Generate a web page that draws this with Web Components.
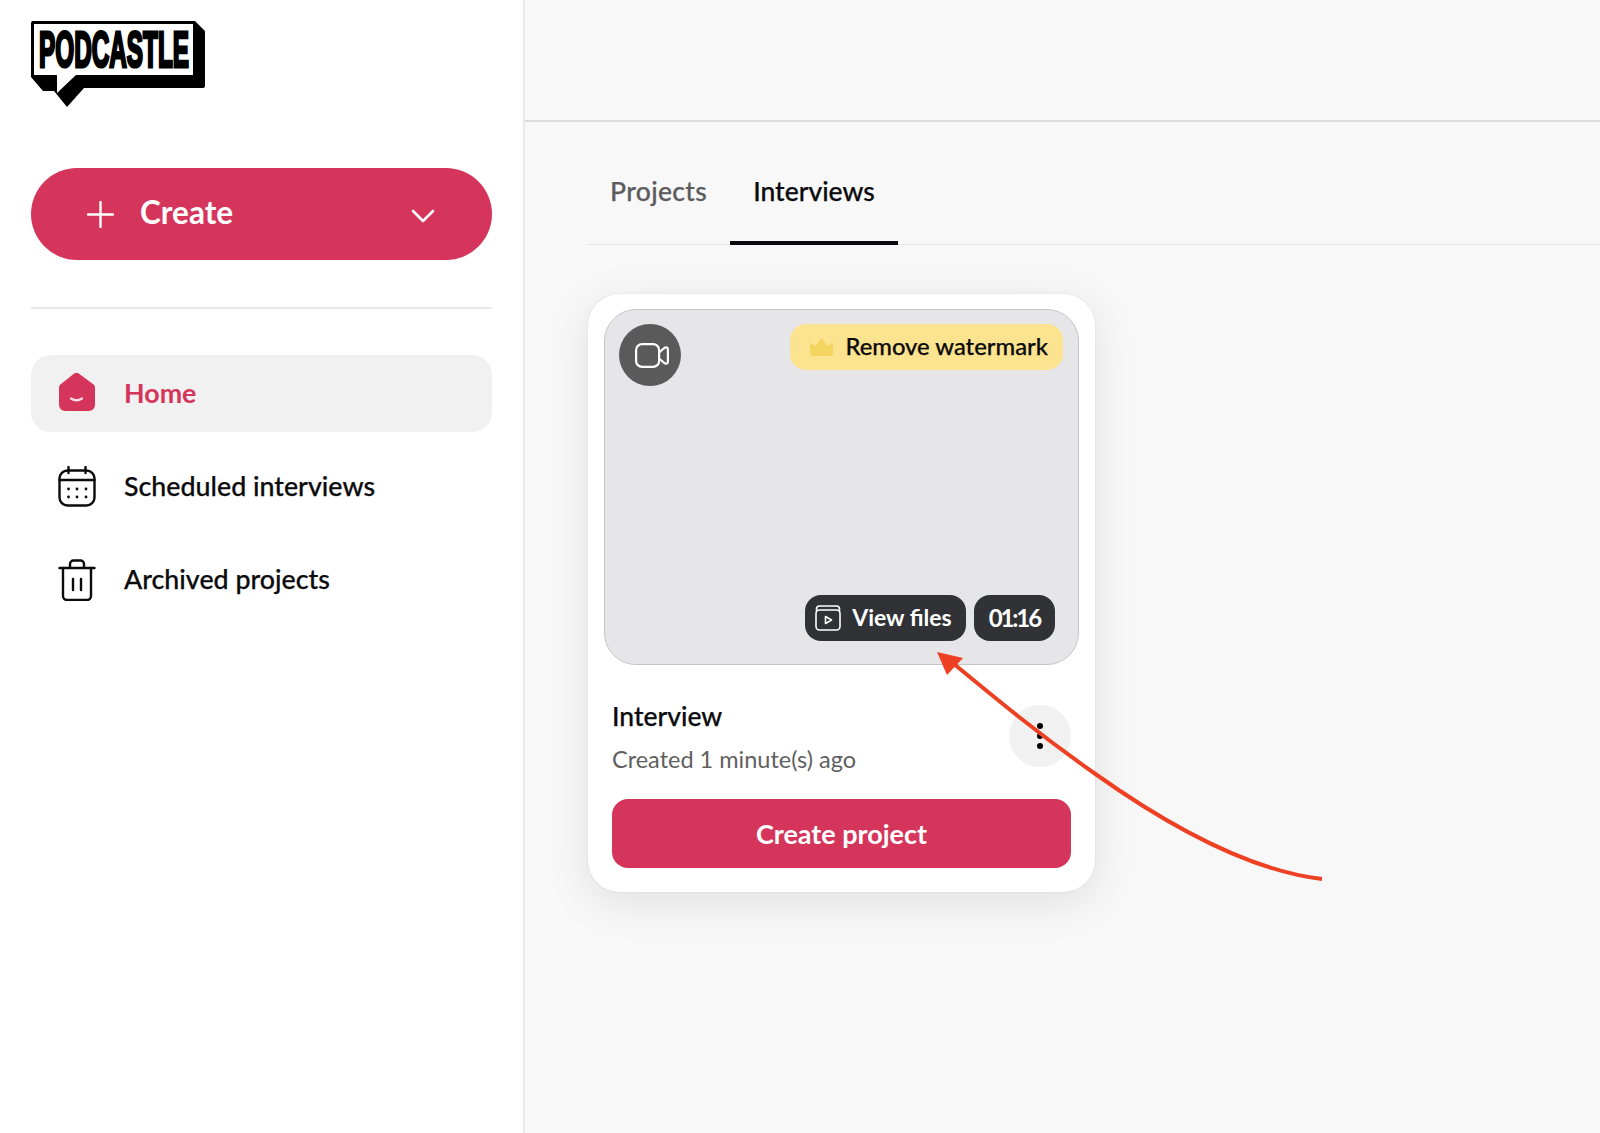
<!DOCTYPE html>
<html lang="en">
<head>
<meta charset="utf-8">
<title>Podcastle</title>
<style>
  html, body { margin: 0; height: 100%; }
  body { font-family: Lato, "Liberation Sans", sans-serif; color: #0b0b0d; background: #f8f8f8; overflow: hidden; }
</style>
</head>
<body>
<pc-app></pc-app>

<script>
class PcLogo extends HTMLElement {
  constructor() {
    super();
    this.attachShadow({ mode: 'open' }).innerHTML = `
      <style>
        :host { display: block; width: 176px; height: 86px; }
        svg { display: block; overflow: visible; }
        text { font-family: "Liberation Sans", sans-serif; font-weight: 700; font-size: 25.100px; }
      </style>
      <svg width="176" height="86" viewBox="0 0 176 86">
        <path d="M2 0H164L174 10V65Q174 67 172 67H53L36 86L23 70H12L0 56V2Q0 0 2 0Z" fill="#000"/>
        <path d="M3 3H162V54H45L26 72V54H3Z" fill="#fff"/>
        <text transform="translate(8 46.400) scale(1 2)" textLength="150" lengthAdjust="spacingAndGlyphs" fill="#000" stroke="#000" stroke-width="1.600">PODCASTLE</text>
      </svg>
    `;
  }
}

class PcCreateButton extends HTMLElement {
  constructor() {
    super();
    this.attachShadow({ mode: 'open' }).innerHTML = `
      <style>
        :host {
          display: flex; align-items: center; height: 92px; box-sizing: border-box;
          padding: 0 57px 0 56px; border-radius: 46px; background: #d5355b;
          color: #fff; font-size: 31.500px; font-weight: 700;
        }
        span { margin-left: 26px; flex: 1; padding-bottom: 4px; }
        svg { display: block; flex: none; }
      </style>
      <svg width="27" height="27" viewBox="0 0 27 27" fill="none" stroke="#fff" stroke-width="2.4" stroke-linecap="round">
        <path d="M13.5 1V26M1 13.5H26"/>
      </svg>
      <span><slot></slot></span>
      <svg width="24" height="14" viewBox="0 0 24 14" fill="none" stroke="#fff" stroke-width="2.6" stroke-linecap="round" stroke-linejoin="round" style="margin-top:4px">
        <path d="M2 2L12 12L22 2"/>
      </svg>
    `;
  }
}

const NAV_ICONS = {
  home: `<path d="M15.6.9a4.5 4.5 0 0 1 5.8 0L35.6 11.5a4 4 0 0 1 1.4 3V32a6 6 0 0 1-6 6H7a6 6 0 0 1-6-6V14.5a4 4 0 0 1 1.4-3Z" fill="#d5355b"/>
         <path d="M13 25.5q5.5 3.6 11 0" fill="none" stroke="#f7dbe2" stroke-width="2.4" stroke-linecap="round"/>`,
  calendar: `<g fill="none" stroke="#0b0b0d" stroke-width="2.4" stroke-linecap="round">
           <rect x="1.5" y="4.5" width="35" height="35" rx="8"/>
           <path d="M1.5 14H36.5M10.500 1V7M27.500 1V7"/></g>
         <g fill="#0b0b0d"><circle cx="10.500" cy="23" r="1.400"/><circle cx="19" cy="23" r="1.400"/><circle cx="28" cy="23" r="1.400"/>
           <circle cx="10.500" cy="31" r="1.400"/><circle cx="19" cy="31" r="1.400"/><circle cx="28" cy="31" r="1.400"/></g>`,
  trash: `<g fill="none" stroke="#0b0b0d" stroke-width="2.4" stroke-linecap="round" stroke-linejoin="round">
           <path d="M1.500 9H36.500M12 9V5a3.500 3.500 0 0 1 3.500-3.500h7A3.500 3.500 0 0 1 26 5V9"/>
           <path d="M5 9V37a4 4 0 0 0 4 4H29a4 4 0 0 0 4-4V9"/>
           <path d="M15 20V31M23 20V31"/></g>`
};

class PcNavItem extends HTMLElement {
  constructor() {
    super();
    this.attachShadow({ mode: 'open' }).innerHTML = `
      <style>
        :host {
          display: flex; align-items: center; height: 77px; padding-left: 27px;
          border-radius: 20px; font-size: 26.800px; font-weight: 500; color: #0b0b0d;
          -webkit-text-stroke: .25px currentColor;
        }
        :host([active]) { background: #f1f1f1; color: #d5355b; font-weight: 700; -webkit-text-stroke: 0; }
        svg { display: block; flex: none; margin-right: 28px; }
        span { padding-bottom: 2px; }
      </style>
      <svg width="38" height="42" viewBox="0 0 38 42"></svg>
      <span><slot></slot></span>
    `;
  }

  connectedCallback() {
    this.shadowRoot.querySelector('svg').innerHTML = NAV_ICONS[this.getAttribute('icon')] || '';
  }
}

class PcSidebar extends HTMLElement {
  constructor() {
    super();
    this.attachShadow({ mode: 'open' }).innerHTML = `
      <style>
        :host {
          display: flex; flex-direction: column; flex: none; box-sizing: border-box;
          width: 525px; height: 100%; padding: 21px 31px 0 31px;
          background: #fff; border-right: 2px solid #e9e9ea;
        }
        pc-create-button { margin-top: 61px; }
        hr { width: 100%; margin: 47px 0 46px; border: 0; border-top: 2px solid #e9e9ea; }
        nav { display: flex; flex-direction: column; gap: 16px; }
      </style>
      <pc-logo></pc-logo>
      <pc-create-button>Create</pc-create-button>
      <hr>
      <nav>
        <pc-nav-item icon="home" active>Home</pc-nav-item>
        <pc-nav-item icon="calendar">Scheduled interviews</pc-nav-item>
        <pc-nav-item icon="trash">Archived projects</pc-nav-item>
      </nav>
    `;
  }
}

class PcTabs extends HTMLElement {
  constructor() {
    super();
    this.attachShadow({ mode: 'open' }).innerHTML = `
      <style>
        :host {
          display: flex; border-bottom: 1px solid #e6e6e7; font-size: 26.500px; font-weight: 500; color: #5c5c5e;
          -webkit-text-stroke: .25px currentColor;
        }
        div { padding: 53px 23px 33px; margin-bottom: -1px; border-bottom: 4px solid transparent; line-height: 33px; }
        div:first-of-type { letter-spacing: .35px; }
        div.on { color: #0b0b0d; border-bottom-color: #0b0b0d; }
      </style>
      <div>Projects</div>
      <div class="on">Interviews</div>
    `;
  }
}

class PcInterviewCard extends HTMLElement {
  constructor() {
    super();
    this.attachShadow({ mode: 'open' }).innerHTML = `
      <style>
        :host {
          display: block; box-sizing: border-box; width: 507px; height: 598px; padding: 15px 16px 24px;
          background: #fff; border-radius: 32px;
          box-shadow: 0 10px 44px rgba(0, 0, 0, .1), 0 0 0 1px #f0f0f0;
        }
        .preview {
          display: flex; flex-direction: column; justify-content: space-between; box-sizing: border-box;
          height: 356px; padding: 14px 23px 23px 14px;
          background: #e6e6e8; border: 1px solid #c6c6c8; border-radius: 32px;
        }
        .top { display: flex; justify-content: space-between; align-items: flex-start; margin-right: -8px; }
        .cam {
          display: flex; align-items: center; justify-content: center;
          width: 62px; height: 62px; border-radius: 50%; background: #5a5a5a;
        }
        .cam svg { margin-left: 3px; }
        .watermark {
          display: flex; align-items: center; gap: 12px; height: 46px; padding: 0 15px 0 20px;
          border-radius: 16px; background: #fce38f; font-size: 23.800px; font-weight: 500; color: #0b0b0d;
          -webkit-text-stroke: .25px currentColor;
        }
        .watermark span { padding-bottom: 2px; }
        .bottom { display: flex; justify-content: flex-end; gap: 8px; }
        .chip {
          display: flex; align-items: center; gap: 11px; height: 46px; padding: 0 14px 0 10px;
          border-radius: 16px; background: #303236; color: #fff; font-size: 23px; font-weight: 700;
        }
        .chip span { padding-bottom: 2px; }
        .chip.time { padding: 0 15px; font-size: 24px; letter-spacing: -2.100px; }
        .meta { display: flex; align-items: flex-start; justify-content: space-between; padding: 30px 8px 0; margin-right: 1px; }
        .title { font-size: 26.500px; font-weight: 500; line-height: 42px; color: #0b0b0d; -webkit-text-stroke: .25px currentColor; }
        .sub { font-size: 23.500px; line-height: 44px; color: #5f5f61; }
        .more {
          display: flex; flex-direction: column; align-items: center; justify-content: center; gap: 4px;
          width: 62px; height: 62px; margin: 10px -1px 0 0; border-radius: 50%; background: #f1f1f1;
        }
        .more i { width: 6px; height: 6px; border-radius: 50%; background: #000; }
        .cta {
          display: flex; align-items: center; justify-content: center; height: 69px; margin: 18px 8px 0;
          border-radius: 16px; background: #d5355b; color: #fff; font-size: 27px; font-weight: 700;
        }
        svg { display: block; flex: none; }
      </style>
      <div class="preview">
        <div class="top">
          <div class="cam">
            <svg width="34" height="25" viewBox="0 0 34 25" fill="none" stroke="#fff" stroke-width="2.200" stroke-linejoin="round">
              <rect x="1.100" y="1.100" width="23" height="22.800" rx="6"/>
              <path d="M24 9.500L29.500 4.800C30.800 3.700 32.900 4.600 32.900 6.300V18.700C32.900 20.400 30.800 21.300 29.500 20.200L24 15.500"/>
            </svg>
          </div>
          <div class="watermark">
            <svg width="23" height="18" viewBox="0 0 23 18" fill="#f4d55f">
              <path d="M0 4.500L5.500 8L11.500 0L17.500 8L23 4.500V15.500Q23 18 20.500 18H2.500Q0 18 0 15.500Z"/>
            </svg>
            <span>Remove watermark</span>
          </div>
        </div>
        <div class="bottom">
          <div class="chip">
            <svg width="26" height="26" viewBox="0 0 26 26" fill="none" stroke="#fff" stroke-width="1.600" stroke-linejoin="round">
              <rect x="1" y="5" width="24" height="20" rx="3.500"/>
              <path d="M1.500 6.500V4Q1.500 1 4.500 1H21.500Q24.500 1 24.500 4V6.500"/>
              <path d="M10.500 11.500L16.500 15L10.500 18.500Z"/>
            </svg>
            <span>View files</span>
          </div>
          <div class="chip time"><span>01:16</span></div>
        </div>
      </div>
      <div class="meta">
        <div>
          <div class="title">Interview</div>
          <div class="sub">Created 1 minute(s) ago</div>
        </div>
        <div class="more"><i></i><i></i><i></i></div>
      </div>
      <div class="cta">Create project</div>
    `;
  }
}

// annotation drawn on top of the screenshot
class PcArrow extends HTMLElement {
  constructor() {
    super();
    this.attachShadow({ mode: 'open' }).innerHTML = `
      <style>
        :host { position: absolute; left: 0; top: 0; width: 1600px; height: 1133px; pointer-events: none; }
        svg { display: block; }
      </style>
      <svg width="1600" height="1133" viewBox="0 0 1600 1133">
        <path d="M1322 879C1245 870 1160 820 1094 773C1040 735 1000 702 954 664" fill="none" stroke="#ee4023" stroke-width="4"/>
        <path d="M937 652L963 658L947 675Z" fill="#ee4023"/>
      </svg>
    `;
  }
}

class PcApp extends HTMLElement {
  constructor() {
    super();
    this.attachShadow({ mode: 'open' }).innerHTML = `
      <style>
        :host { display: flex; position: relative; width: 1600px; height: 1133px; overflow: hidden; }
        main { flex: 1; min-width: 0; }
        header { height: 120px; border-bottom: 2px solid #dcdcde; }
        .content { padding: 0 0 0 62px; }
        pc-interview-card { margin: 49px 0 0 1px; }
      </style>
      <pc-sidebar></pc-sidebar>
      <main>
        <header></header>
        <div class="content">
          <pc-tabs></pc-tabs>
          <pc-interview-card></pc-interview-card>
        </div>
      </main>
      <pc-arrow></pc-arrow>
    `;
  }
}

customElements.define('pc-logo', PcLogo);
customElements.define('pc-create-button', PcCreateButton);
customElements.define('pc-nav-item', PcNavItem);
customElements.define('pc-sidebar', PcSidebar);
customElements.define('pc-tabs', PcTabs);
customElements.define('pc-interview-card', PcInterviewCard);
customElements.define('pc-arrow', PcArrow);
customElements.define('pc-app', PcApp);
</script>
</body>
</html>
